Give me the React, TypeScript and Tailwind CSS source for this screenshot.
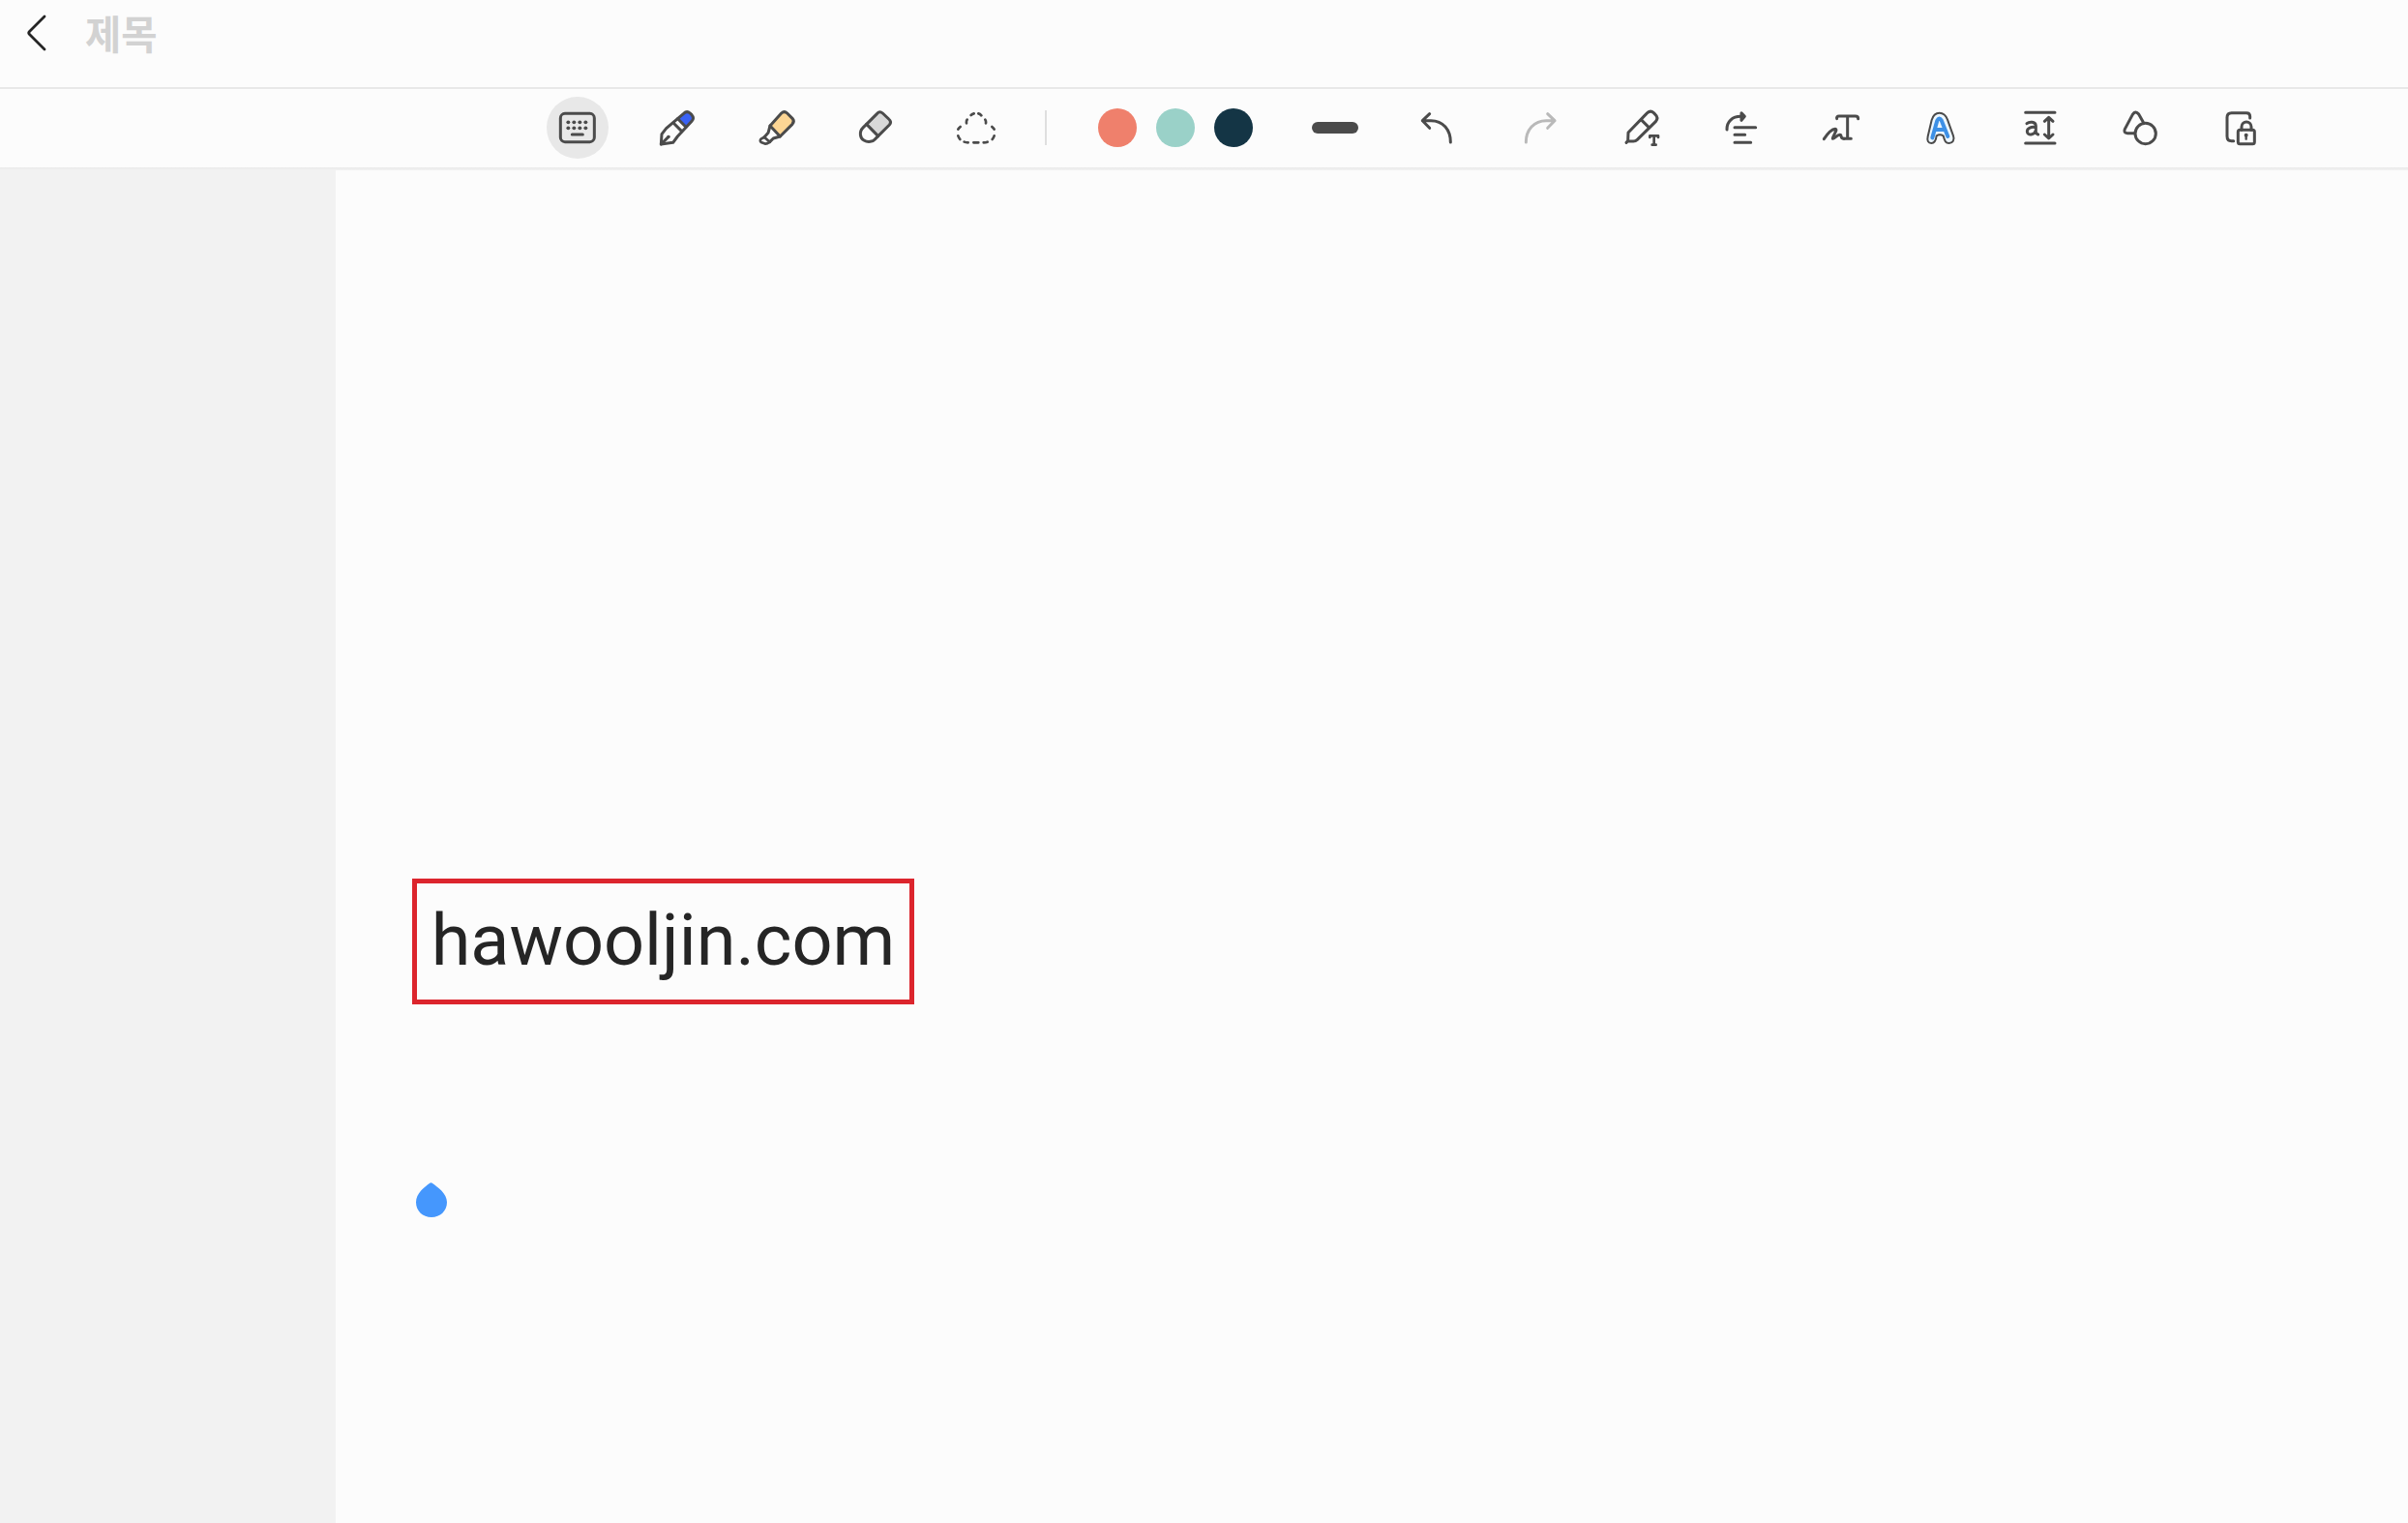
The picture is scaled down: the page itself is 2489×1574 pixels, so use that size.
import React from 'react';

interface IconProps {
  children: React.ReactNode;
  className?: string;
}

// Every toolbar icon is drawn on the same 192 grid
const Icon = ({ children, className = 'text-[#4b4b4b]' }: IconProps) => (
  <svg
    viewBox="0 0 192 192"
    fill="none"
    stroke="currentColor"
    strokeWidth={9}
    strokeLinecap="round"
    strokeLinejoin="round"
    className={`w-16 h-16 ${className}`}
  >
    {children}
  </svg>
);

const KeyboardIcon = () => (
  <Icon>
    <rect x="43" y="52" width="105" height="88" rx="14" />
    <g fill="currentColor" stroke="none">
      {[67, 85, 103, 121].map((x) => (
        <React.Fragment key={x}>
          <circle cx={x} cy="79" r="5.8" />
          <circle cx={x} cy="97" r="5.8" />
        </React.Fragment>
      ))}
    </g>
    <path d="M79 117H112" />
  </Icon>
);

const PenIcon = () => (
  <Icon>
    <path d="M98 68L116 51Q125 43 134 50L142 58Q149 67 141 76L123 94Z" fill="#3a62f5" stroke="none" />
    <path d="M46 147L48 116L62 98L116 52Q126 42 136 51L141 56Q150 66 141 76L97 123L83 142Z" />
    <path d="M98 68L123 94M84 81L110 107M46 147L69 124" />
    <circle cx="69" cy="124" r="3" fill="currentColor" strokeWidth={4} />
  </Icon>
);

const HighlighterIcon = () => (
  <Icon>
    <path d="M75 90L110 51Q119 43 128 51L144 67Q152 76 144 85L106 123Z" fill="#fdd694" />
    <path d="M75 90L69 112L57 125M106 123L85 129L74 140" />
    <path d="M57 125L47 131Q42 137 47 141L61 146Q66 146 74 140Z" strokeWidth={8} />
  </Icon>
);

const EraserIcon = () => (
  <Icon>
    <path d="M65 85L98 52Q106 43 115 51L134 69Q144 78 136 87L101 122Z" fill="#d8d8d8" />
    <path d="M65 85L55 95C40 110 46 129 57 135C70 143 85 139 92 131L101 122" />
  </Icon>
);

const LassoIcon = () => (
  <Icon>
    <path d="M103 52Q108 53 112 58M80 57Q84 53 89 52M66 82Q65 75 68 71M124 71Q127 76 126 82M47 93Q42 97 40 101M145 93Q150 97 152 101M40 121Q42 127 46 132M152 121Q150 127 146 132M59 140Q63 142 71 142M88 142H103M119 142Q126 142 131 140" strokeWidth={8} />
  </Icon>
);

const UndoIcon = () => (
  <Icon>
    <path d="M74 53L52 74L74 97M52 74H78C116 74 139 103 139 141" />
  </Icon>
);

const RedoIcon = () => (
  <Icon className="text-[#b9b9b9]">
    <path d="M119 53L141 74L119 97M141 74H115C77 74 52 103 52 141" />
  </Icon>
);

const PenToTextIcon = () => (
  <Icon>
    <path d="M48 142L53 137L54 111L111 52Q122 40 133 50L138 55Q149 65 139 77L82 133Q77 138 70 138L53 138" />
    <path d="M96 73L118 95" />
    <path d="M121 126V121H147V126M134 121V149M128 149H140" strokeWidth={8} />
  </Icon>
);

const AlignIcon = () => (
  <Icon>
    <path d="M51 102C50 77 68 61 94 61H104" />
    <path d="M96 50L106 61L96 73Z" fill="currentColor" />
    <path d="M75 95H140M75 118H107M75 142H125" />
  </Icon>
);

const HandwritingIcon = () => (
  <Icon>
    <path d="M83 68Q81 60 90 60H140Q149 60 149 68M116 60V129M105 130H127" />
    <path d="M43 131C53 116 66 101 78 100C88 101 68 124 70 130C75 132 85 115 94 118C99 121 92 129 105 130" />
  </Icon>
);

const TextStyleIcon = () => (
  <Icon>
    <path
      d="M92 50C106 50 113 60 117 71L135 121C140 134 133 144 122 144C112 144 108 138 104 121Q93 115 83 121C81 137 77 144 67 144C57 144 53 136 56 123L68 72C72 58 80 50 92 50Z"
      fill="#edf7ff"
      strokeWidth={6}
    />
    <path d="M70 127L85 74Q91 61 98 73L118 123M79 102H108" stroke="#3d90e6" strokeWidth={12} />
  </Icon>
);

const LineSpacingIcon = () => (
  <Icon>
    <path d="M50 49H141M50 144H141" />
    <path d="M54 83C61 77 81 75 82 90V110Q83 115 89 117M82 95C68 92 55 97 55 107C55 122 79 120 82 103" />
    <path d="M122 67V126M109 76L122 64L135 76M109 117L122 129L135 117" />
  </Icon>
);

const ShapesIcon = () => (
  <Icon>
    <path d="M80 113H57Q44 113 49 100L73 55Q82 41 92 54L106 79" />
    <circle cx="113" cy="114" r="32" />
  </Icon>
);

const PageLockIcon = () => (
  <Icon>
    <path d="M125 66V61Q125 50 114 50H68Q54 50 54 64V122Q54 137 68 137H74" />
    <rect x="88" y="103" width="51" height="43" rx="6" />
    <path d="M99 103V93C99 73 129 73 129 93V103" />
    <circle cx="113" cy="119" r="6" fill="currentColor" stroke="none" />
    <path d="M113 120V131" strokeWidth={7} />
  </Icon>
);

const ToolButton = ({ children, label, active = false }: { children: React.ReactNode; label: string; active?: boolean }) => (
  <button
    type="button"
    aria-label={label}
    className={`w-16 h-16 shrink-0 rounded-full ${active ? 'bg-[#e8e8e8]' : ''}`}
  >
    {children}
  </button>
);

const Header = () => (
  <header className="flex items-start h-[92px] shrink-0 border-b-2 border-[#e8e8e8] pl-6">
    <svg viewBox="0 0 28 44" className="w-7 h-11 mt-3" fill="none" stroke="#252525" strokeWidth={2.8} strokeLinecap="round" strokeLinejoin="round">
      <path d="M22 5L6.5 20.5Q5 22 6.5 23.5L22 39" />
    </svg>
    <h1 className="ml-9 mt-[5px] text-[40.5px] leading-[58px] font-bold text-[#d2d2d2] font-['Noto_Sans_CJK_KR',sans-serif]">
      제목
    </h1>
  </header>
);

const Toolbar = () => (
  <div className="flex items-center h-[81px] shrink-0 pl-[565px] pb-px">
    <div className="flex items-center gap-[39px]">
      <ToolButton label="키보드" active><KeyboardIcon /></ToolButton>
      <ToolButton label="펜"><PenIcon /></ToolButton>
      <ToolButton label="형광펜"><HighlighterIcon /></ToolButton>
      <ToolButton label="지우개"><EraserIcon /></ToolButton>
      <ToolButton label="선택"><LassoIcon /></ToolButton>
      <div className="w-0.5 h-9 bg-[#dfdfdf]" />
    </div>

    <div className="flex items-center gap-5 ml-[53px]">
      <div className="w-10 h-10 rounded-full bg-[#ef806c]" />
      <div className="w-10 h-10 rounded-full bg-[#9ad1c8]" />
      <div className="w-10 h-10 rounded-full bg-[#143545]" />
    </div>
    <div className="w-12 h-3 rounded-full bg-[#4b4b4b] ml-[61px]" />

    <div className="flex items-center gap-[43px] ml-[49px]">
      <ToolButton label="실행 취소"><UndoIcon /></ToolButton>
      <ToolButton label="다시 실행"><RedoIcon /></ToolButton>
    </div>
    <div className="flex items-center gap-[39px] ml-[41px]">
      <ToolButton label="텍스트로 변환"><PenToTextIcon /></ToolButton>
      <ToolButton label="정렬"><AlignIcon /></ToolButton>
      <ToolButton label="필기 변환"><HandwritingIcon /></ToolButton>
      <ToolButton label="텍스트 스타일"><TextStyleIcon /></ToolButton>
      <ToolButton label="줄 간격"><LineSpacingIcon /></ToolButton>
      <ToolButton label="도형"><ShapesIcon /></ToolButton>
    </div>
    <div className="flex items-center ml-10">
      <ToolButton label="페이지 잠금"><PageLockIcon /></ToolButton>
    </div>
  </div>
);

export default function App() {
  return (
    <div className="flex flex-col w-full h-screen overflow-hidden bg-[#fcfcfc]">
      <Header />
      <Toolbar />
      <div className="h-[3px] shrink-0 bg-gradient-to-b from-[#e9e9e9] to-[#f3f3f3]" />
      <main className="flex flex-1 min-h-0">
        <aside className="w-[347px] shrink-0 bg-[#f2f2f2]" />
        <section className="flex-1 pl-[79px] pt-[732px]">
          {/* Highlighted note text */}
          <div className="flex items-center justify-center w-[519px] h-[130px] border-[5px] border-[#dc252d]">
            <p className="-mt-px text-[73.8px] leading-none whitespace-nowrap text-[#252525] font-['Roboto',sans-serif]">
              hawooljin.com
            </p>
          </div>
          {/* Cursor handle */}
          <svg viewBox="0 0 32 36" className="w-8 h-9 mt-[184px] ml-[4px]" fill="#4597fd">
            <path d="M14.3 0.8Q15.5 -0.3 16.7 0.8C22 4.5 32 11.5 32 20.5C32 29.5 25 36 16 36C7 36 0 29.5 0 20.5C0 11.5 9 4.5 14.3 0.8Z" />
          </svg>
        </section>
      </main>
    </div>
  );
}
